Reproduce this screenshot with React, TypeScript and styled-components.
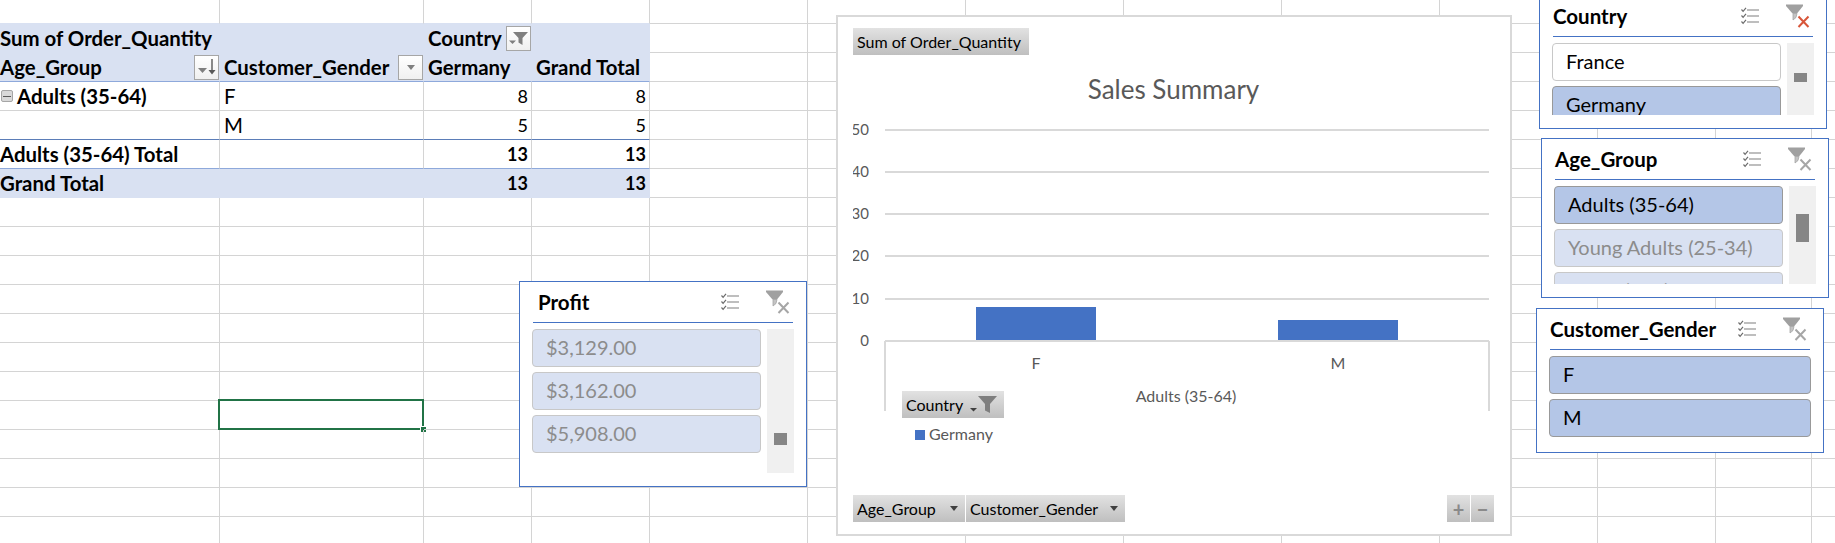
import styled, { createGlobalStyle } from 'styled-components'

const BAND = '#d9e1f2'
const GRID = '#d4d4d4'
const FONT = `Lato, 'Open Sans', sans-serif`

const GlobalStyle = createGlobalStyle`
  html, body {
    margin: 0;
    padding: 0;
    overflow: hidden;
    background: #fff;
    font-family: ${FONT};
  }
`

const Sheet = styled.div`
  position: relative;
  width: 1835px;
  height: 543px;
  overflow: hidden;
  display: grid;
  grid-template-columns: 220px 204px 108px 118px repeat(6, 158px) 118px 96px 24px;
  grid-auto-rows: 29px;
  grid-template-rows: 24px;
  color: #000;
`

const Cell = styled.div<{
  $band?: boolean
  $bold?: boolean
  $right?: boolean
  $bottom?: string
  $inset?: number
  $selected?: boolean
}>`
  position: relative;
  box-sizing: border-box;
  display: flex;
  align-items: center;
  justify-content: ${({ $right }) => ($right ? 'flex-end' : 'flex-start')};
  gap: 4px;
  padding: 0 3px 0 ${({ $inset }) => $inset ?? 4}px;
  font-size: ${({ $right }) => ($right ? 18 : 20.4)}px;
  font-weight: ${({ $bold }) => ($bold ? 700 : 400)};
  white-space: nowrap;
  background: ${({ $band }) => ($band ? BAND : 'transparent')};
  border-right: 1px solid ${({ $band }) => ($band ? BAND : GRID)};
  border-bottom: 1px solid ${({ $bottom }) => $bottom ?? GRID};

  ${({ $selected }) =>
    $selected &&
    `
    &::before {
      content: '';
      position: absolute;
      inset: -2px -1px -1px -2px;
      border: 2px solid #217346;
    }
    &::after {
      content: '';
      position: absolute;
      right: -4px;
      bottom: -4px;
      width: 7px;
      height: 7px;
      background: #217346;
      border: 1px solid #fff;
      box-sizing: border-box;
    }
  `}
`

const CellText = styled.span`
  flex: 1;
`

const FieldButton = styled.span`
  flex: none;
  box-sizing: border-box;
  width: 25px;
  height: 25px;
  margin-right: -3px;
  display: flex;
  align-items: center;
  justify-content: center;
  border: 1px solid #a6a6a6;
  background: linear-gradient(#fff, #f0f0f0);
`

const CollapseBox = styled.span`
  flex: none;
  box-sizing: border-box;
  width: 12px;
  height: 12px;
  display: flex;
  align-items: center;
  justify-content: center;
  border: 1px solid #a6a6a6;
  border-radius: 2px;
  background: #d9d9d9;

  &::before {
    content: '';
    width: 8px;
    height: 1px;
    background: #595959;
  }
`

const Floating = styled.div<{ $left: number; $top: number; $width: number; $height: number }>`
  position: absolute;
  box-sizing: border-box;
  left: ${({ $left }) => $left}px;
  top: ${({ $top }) => $top}px;
  width: ${({ $width }) => $width}px;
  height: ${({ $height }) => $height}px;
  background: #fff;
`

const SlicerFrame = styled(Floating)`
  border: 1px solid #4472c4;
  padding: 0 12px;
  display: flex;
  flex-direction: column;
`

const SlicerHeader = styled.div<{ $inset: number }>`
  box-sizing: border-box;
  flex: none;
  height: 41px;
  margin: 0 0 6px 1px;
  padding-left: ${({ $inset }) => $inset}px;
  width: 260px;
  display: flex;
  align-items: center;
  border-bottom: 1px solid #4472c4;
`

const SlicerTitle = styled.div`
  flex: 1;
  font-size: 20.5px;
  font-weight: 700;
  white-space: nowrap;
`

const SlicerIcons = styled.div`
  flex: none;
  display: flex;
  align-items: center;
  gap: 27px;
  margin-right: 3px;
`

const SlicerBody = styled.div<{ $height: number }>`
  display: flex;
  gap: 6px;
  height: ${({ $height }) => $height}px;
  overflow: hidden;
`

const ItemList = styled.div`
  flex: 1;
  display: flex;
  flex-direction: column;
  gap: 5px;
`

type ItemState = 'selected' | 'plain' | 'empty'

const SlicerItem = styled.div<{ $state: ItemState }>`
  flex: none;
  box-sizing: border-box;
  height: 38px;
  padding: 0 0 2px 13px;
  display: flex;
  align-items: center;
  border-radius: 4px;
  font-size: 20px;
  white-space: nowrap;
  border: 1px solid
    ${({ $state }) => ($state === 'selected' ? '#999' : '#c8c8c8')};
  background: ${({ $state }) =>
    $state === 'selected' ? '#b4c6e7' : $state === 'empty' ? BAND : '#fff'};
  color: ${({ $state }) => ($state === 'empty' ? '#8c8c8c' : '#000')};
`

const Scrollbar = styled.div`
  flex: none;
  width: 27px;
  background: #f0f0f0;
  display: flex;
  justify-content: center;
`

const Thumb = styled.div<{ $offset: number; $size: number }>`
  width: 13px;
  height: ${({ $size }) => $size}px;
  margin-top: ${({ $offset }) => $offset}px;
  background: #868686;
`

const ChartFrame = styled(Floating)`
  border: 2px solid #d9d9d9;
  padding: 11px 16px 12px 15px;
  display: flex;
  flex-direction: column;
`

const ChartField = styled.div<{ $width: number }>`
  flex: none;
  box-sizing: border-box;
  width: ${({ $width }) => $width}px;
  height: 27px;
  padding: 0 7px 0 4px;
  display: flex;
  align-items: center;
  justify-content: space-between;
  font-size: 16px;
  white-space: nowrap;
  background: linear-gradient(#e2e2e2, #bfbfbf);
`

const ChartTitle = styled.div`
  flex: none;
  height: 34px;
  margin: 17px 0 1px;
  line-height: 34px;
  text-align: center;
  font-size: 26px;
  color: #595959;
`

const Plot = styled.svg`
  display: block;
  flex: 1;
  width: 641px;
  min-height: 0;

  text {
    font-family: ${FONT};
    font-size: 16px;
    fill: #595959;
  }
`

const AxisValue = styled.text`
  && {
    font-size: 15px;
  }
`

const LegendField = styled(ChartField)`
  position: absolute;
  left: 64px;
  top: 374px;
  padding-right: 4px;
`

const ChartFooter = styled.div`
  flex: none;
  display: flex;
  gap: 1px;
`

const ZoomGroup = styled.div`
  margin-left: auto;
  display: flex;
  gap: 1px;
`

const ZoomButton = styled.div`
  box-sizing: border-box;
  width: 23px;
  height: 27px;
  display: flex;
  align-items: center;
  justify-content: center;
  font-size: 20px;
  font-weight: 700;
  color: #8a8a8a;
  background: linear-gradient(#e2e2e2, #bfbfbf);
`

const MultiSelectIcon = () => (
  <svg width="18" height="18" viewBox="0 0 18 18" fill="none">
    <path d="M6 3h12M6 9h12M6 15h12" stroke="#7f7f7f" strokeWidth="1.2" />
    <path
      d="M0.500 2.500l1.600 1.800L5 0.800M0.500 8.500l1.600 1.800L5 6.800M0.500 14.500l1.600 1.800L5 12.800"
      stroke="#6b6b6b"
      strokeWidth="1.2"
    />
  </svg>
)

const ClearFilterIcon = ({ active }: { active?: boolean }) => (
  <svg width="24" height="24" viewBox="0 0 24 24" fill="none">
    <path d="M0 0.500h17v1.600L11 9.500H6.500L0 2.100z" fill="#a0a0a0" />
    <path d="M7 9.500h4l-1 4-3 2.500z" fill="#c4c4c4" stroke="#a6a6a6" strokeWidth="0.8" />
    <path
      d="M12.500 12.500l10 10.500M22.500 12.500l-10 10.500"
      stroke={active ? '#d8563a' : '#a6a6a6'}
      strokeWidth="2"
    />
  </svg>
)

const DropMark = ({ color = '#7f7f7f' }: { color?: string }) => (
  <svg width="8" height="5" viewBox="0 0 10 6">
    <path d="M0 0h10L5 6z" fill={color} />
  </svg>
)

const SortIcon = () => (
  <svg width="20" height="17" viewBox="0 0 20 17">
    <path d="M1 9h9l-4.500 5z" fill="#7f7f7f" />
    <path d="M15 0v13" stroke="#595959" strokeWidth="1.400" />
    <path d="M11.500 11h7L15 15.500z" fill="#595959" />
  </svg>
)

const FilterButtonIcon = () => (
  <svg width="20" height="17" viewBox="0 0 20 17">
    <path d="M0 10.500h7L3.500 14z" fill="#7f7f7f" />
    <path d="M4 2h15l-5.500 6v7l-4-2.500V8z" fill="#7f7f7f" />
  </svg>
)

type SheetCell = {
  text?: string
  bold?: boolean
  right?: boolean
  inset?: number
  collapse?: boolean
  button?: JSX.Element
}

type PivotRow = {
  band?: boolean
  bottom?: string
  cells: SheetCell[]
}

const pivotRows: PivotRow[] = [
  {
    band: true,
    bottom: BAND,
    cells: [
      { text: 'Sum of Order_Quantity', bold: true, inset: 0 },
      {},
      { text: 'Country', bold: true, button: <FilterButtonIcon /> },
      {},
    ],
  },
  {
    band: true,
    bottom: '#8ea9db',
    cells: [
      { text: 'Age_Group', bold: true, inset: 0, button: <SortIcon /> },
      { text: 'Customer_Gender', bold: true, button: <DropMark /> },
      { text: 'Germany', bold: true },
      { text: 'Grand Total', bold: true },
    ],
  },
  {
    cells: [
      { text: 'Adults (35-64)', bold: true, inset: 1, collapse: true },
      { text: 'F' },
      { text: '8', right: true },
      { text: '8', right: true },
    ],
  },
  {
    bottom: '#5b7db8',
    cells: [{}, { text: 'M' }, { text: '5', right: true }, { text: '5', right: true }],
  },
  {
    bottom: '#8ea9db',
    cells: [
      { text: 'Adults (35-64) Total', bold: true, inset: 0 },
      {},
      { text: '13', bold: true, right: true },
      { text: '13', bold: true, right: true },
    ],
  },
  {
    band: true,
    bottom: BAND,
    cells: [
      { text: 'Grand Total', bold: true, inset: 0 },
      {},
      { text: '13', bold: true, right: true },
      { text: '13', bold: true, right: true },
    ],
  },
]

const COLUMN_COUNT = 13
const ROW_COUNT = 19

const renderRow = (row: number) => {
  const pivot = pivotRows[row - 1]
  return Array.from({ length: COLUMN_COUNT }, (_, col) => {
    const key = `${row}-${col}`
    if (row === 0) {
      return <Cell key={key} $bottom={col < 4 ? BAND : undefined} />
    }
    if (pivot && col < 4) {
      const cell = pivot.cells[col]
      return (
        <Cell
          key={key}
          $band={pivot.band}
          $bold={cell.bold}
          $right={cell.right}
          $inset={cell.inset}
          $bottom={pivot.bottom}
        >
          {cell.collapse && <CollapseBox />}
          {cell.right ? cell.text : <CellText>{cell.text}</CellText>}
          {cell.button && <FieldButton>{cell.button}</FieldButton>}
        </Cell>
      )
    }
    if (pivot && col > 3) {
      return <Cell key={key} />
    }
    return <Cell key={key} $selected={row === 14 && col === 1} />
  })
}

type SlicerProps = {
  title: string
  left: number
  top: number
  height: number
  bodyHeight: number
  inset?: number
  active?: boolean
  items: { label: string; state: ItemState }[]
  thumb?: { offset: number; size: number }
}

const Slicer = ({ title, left, top, height, bodyHeight, inset = 0, active, items, thumb }: SlicerProps) => (
  <SlicerFrame $left={left} $top={top} $width={288} $height={height}>
    <SlicerHeader $inset={inset}>
      <SlicerTitle>{title}</SlicerTitle>
      <SlicerIcons>
        <MultiSelectIcon />
        <ClearFilterIcon active={active} />
      </SlicerIcons>
    </SlicerHeader>
    <SlicerBody $height={bodyHeight}>
      <ItemList>
        {items.map((item) => (
          <SlicerItem key={item.label} $state={item.state}>
            {item.label}
          </SlicerItem>
        ))}
      </ItemList>
      {thumb && (
        <Scrollbar>
          <Thumb $offset={thumb.offset} $size={thumb.size} />
        </Scrollbar>
      )}
    </SlicerBody>
  </SlicerFrame>
)

const gridLines = [
  { label: '50', y: 130 },
  { label: '40', y: 172 },
  { label: '30', y: 214 },
  { label: '20', y: 256 },
  { label: '10', y: 299 },
  { label: '0', y: 341 },
]

const SalesChart = () => (
  <ChartFrame $left={836} $top={15} $width={676} $height={521}>
    <ChartField $width={176}>Sum of Order_Quantity</ChartField>
    <ChartTitle>Sales Summary</ChartTitle>
    <Plot viewBox="853 107 641 388">
      {gridLines.map((line) => (
        <g key={line.label}>
          <line x1="885" x2="1489" y1={line.y} y2={line.y} stroke="#d9d9d9" strokeWidth="2" />
          <AxisValue x="869" y={line.y + 5} textAnchor="end">
            {line.label}
          </AxisValue>
        </g>
      ))}
      <path d="M885 341V411M1489 341V411" stroke="#d9d9d9" strokeWidth="2" />
      <rect x="976" y="307" width="120" height="33" fill="#4472c4" />
      <rect x="1278" y="320" width="120" height="20" fill="#4472c4" />
      <text x="1036" y="369" textAnchor="middle">F</text>
      <text x="1338" y="369" textAnchor="middle">M</text>
      <text x="1186" y="402" textAnchor="middle">Adults (35-64)</text>
      <rect x="915" y="430" width="10" height="10" fill="#4472c4" />
      <text x="929" y="440">Germany</text>
    </Plot>
    <LegendField $width={102}>
      Country
      <svg width="36" height="20" viewBox="0 0 36 20">
        <path d="M6 13h7l-3.500 3.500z" fill="#404040" />
        <path d="M14 1h19l-7 8v9l-5-2.500V9z" fill="#7f7f7f" />
      </svg>
    </LegendField>
    <ChartFooter>
      <ChartField $width={112}>
        Age_Group
        <DropMark color="#404040" />
      </ChartField>
      <ChartField $width={159}>
        Customer_Gender
        <DropMark color="#404040" />
      </ChartField>
      <ZoomGroup>
        <ZoomButton>+</ZoomButton>
        <ZoomButton>−</ZoomButton>
      </ZoomGroup>
    </ChartFooter>
  </ChartFrame>
)

export default function App() {
  return (
    <>
      <GlobalStyle />
      <Sheet>
        {Array.from({ length: ROW_COUNT }, (_, row) => renderRow(row))}
        <Slicer
          title="Profit"
          left={519}
          top={281}
          height={206}
          bodyHeight={144}
          inset={5}
          items={[
            { label: '$3,129.00', state: 'empty' },
            { label: '$3,162.00', state: 'empty' },
            { label: '$5,908.00', state: 'empty' },
          ]}
          thumb={{ offset: 104, size: 12 }}
        />
        <SalesChart />
        <Slicer
          title="Country"
          left={1539}
          top={-5}
          height={134}
          bodyHeight={72}
          active
          items={[
            { label: 'France', state: 'plain' },
            { label: 'Germany', state: 'selected' },
          ]}
          thumb={{ offset: 30, size: 9 }}
        />
        <Slicer
          title="Age_Group"
          left={1541}
          top={138}
          height={160}
          bodyHeight={98}
          items={[
            { label: 'Adults (35-64)', state: 'selected' },
            { label: 'Young Adults (25-34)', state: 'empty' },
            { label: 'Youth (<25)', state: 'empty' },
          ]}
          thumb={{ offset: 28, size: 28 }}
        />
        <Slicer
          title="Customer_Gender"
          left={1536}
          top={308}
          height={145}
          bodyHeight={82}
          items={[
            { label: 'F', state: 'selected' },
            { label: 'M', state: 'selected' },
          ]}
        />
      </Sheet>
    </>
  )
}
